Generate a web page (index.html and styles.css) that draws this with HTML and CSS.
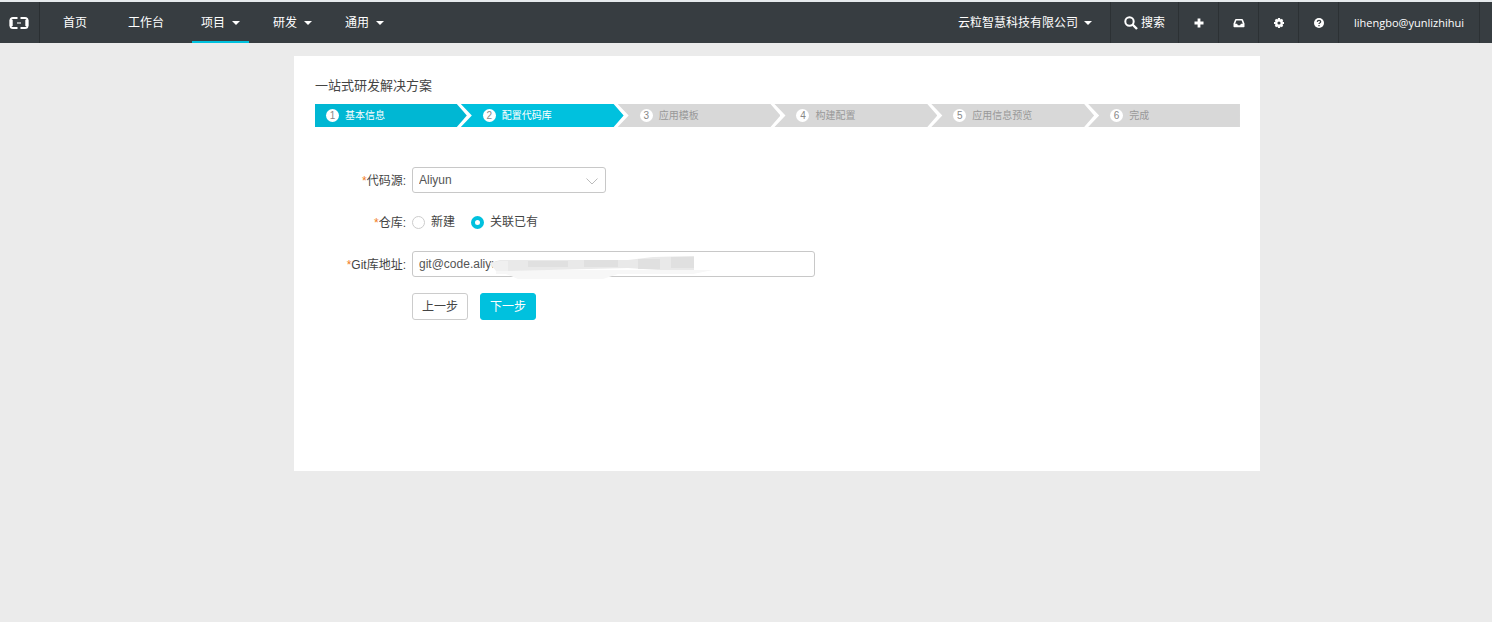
FILE: index.html
```
<!DOCTYPE html>
<html lang="zh-CN">
<head>
<meta charset="utf-8">
<title>一站式研发解决方案</title>
<link rel="stylesheet" href="styles.css">
</head>
<body>
<header class="topbar">
  <a class="logo" href="#" aria-label="控制台">
    <svg width="20" height="14" viewBox="0 0 20 14" fill="none" stroke="#fff"><path stroke-width="2" d="M8.500 2H4Q1.500 2 1.500 4.500v5Q1.500 12 4 12H8.500M11.500 2H16Q18.500 2 18.500 4.500v5Q18.500 12 16 12H11.500"/><path stroke-width="3" d="M2.200 4v6M17.800 4v6"/><path d="M8 7h4" stroke-width="1.500" stroke="#c9cbcd"/></svg>
  </a>
  <nav class="nav">
    <a class="nav-item plain" href="#">首页</a>
    <a class="nav-item plain" href="#">工作台</a>
    <a class="nav-item active" href="#">项目<span class="caret"></span></a>
    <a class="nav-item" href="#">研发<span class="caret"></span></a>
    <a class="nav-item" href="#">通用<span class="caret"></span></a>
  </nav>
  <div class="tools">
    <a class="tool company" href="#">云粒智慧科技有限公司<span class="caret"></span></a>
    <a class="tool search" href="#"><svg width="14" height="14" viewBox="0 0 14 14" fill="none" stroke="#fff" stroke-width="2"><circle cx="5.500" cy="5.500" r="4.200"/><path d="M8.500 8.500l4.500 4.500" stroke-width="2.400"/></svg>搜索</a>
    <a class="tool icon" href="#" aria-label="新建"><svg width="10" height="10" viewBox="0 0 10 10"><path d="M3.600.5h2.800v3.100h3.100v2.800H6.400v3.100H3.600V6.400H.5V3.600h3.100z" fill="#fff"/></svg></a>
    <a class="tool icon" href="#" aria-label="消息"><svg width="12" height="10" viewBox="0 0 12 10"><path fill-rule="evenodd" d="M3 1h6q.7 0 1 .7l1.500 3.800v3q0 .7-.7.700H1.200q-.7 0-.7-.7v-3L2 1.700Q2.300 1 3 1zm.4 1.500L2.200 5.700h1.900l.8 1.500h2.200l.8-1.500h1.900L8.600 2.500z" fill="#fff"/></svg></a>
    <a class="tool icon" href="#" aria-label="设置"><svg width="10" height="10" viewBox="0 0 10 10"><circle cx="5" cy="5" r="2.800" fill="none" stroke="#fff" stroke-width="2.400"/><path d="M5 0v1.500M5 8.500V10M0 5h1.500M8.500 5H10M1.500 1.500l1 1M7.500 7.500l1 1M8.500 1.500l-1 1M2.500 7.500l-1 1" stroke="#fff" stroke-width="2.200"/></svg></a>
    <a class="tool icon" href="#" aria-label="帮助"><svg width="10" height="10" viewBox="0 0 10 10"><circle cx="5" cy="5" r="5" fill="#fff"/><path d="M3.300 3.900Q3.400 2.400 5 2.400t1.700 1.400Q6.700 4.600 5.700 5 5 5.300 5 6.100M5 6.900v1.300" fill="none" stroke="#373d41" stroke-width="1.300"/></svg></a>
    <a class="tool user" href="#">lihengbo@yunlizhihui</a>
  </div>
</header>
<main class="page">
  <section class="panel">
    <h1 class="title">一站式研发解决方案</h1>
    <ol class="steps">
      <li class="step done"><span class="num">1</span>基本信息</li>
      <li class="step current"><span class="num">2</span>配置代码库</li>
      <li class="step"><span class="num">3</span>应用模板</li>
      <li class="step"><span class="num">4</span>构建配置</li>
      <li class="step"><span class="num">5</span>应用信息预览</li>
      <li class="step"><span class="num">6</span>完成</li>
    </ol>
    <form class="form">
      <label class="label" for="source"><span class="req">*</span>代码源:</label>
      <div class="select-wrap">
        <select class="field" id="source"><option>Aliyun</option></select>
        <svg class="arrow" width="12" height="7" viewBox="0 0 12 7" fill="none" stroke="#bbb"><path d="M.5.5L6 6 11.500.5"/></svg>
      </div>
      <span class="label" id="repo"><span class="req">*</span>仓库:</span>
      <div class="radios" role="radiogroup" aria-labelledby="repo">
        <label class="radio"><input type="radio" name="repo">新建</label>
        <label class="radio"><input type="radio" name="repo" checked>关联已有</label>
      </div>
      <label class="label" for="git"><span class="req">*</span>Git库地址:</label>
      <div class="git-wrap">
        <input class="field" id="git" type="text" value="git@code.aliyu">
        <svg class="smudge" width="225" height="26" viewBox="0 0 225 26">
          <path d="M8 16H225L205 20H130L115 25H30L18 20H8z" fill="#f7f7f7"/>
          <path d="M2 9L12 6H140L165 3 206 2V16H170L140 14 20 17 5 14z" fill="#e9e9e9"/>
          <path d="M40 7h40v6H40zM96 6h34v7H96zM150 5h22v10h-22zM183 3h23v11h-23z" fill="#e0e0e0"/>
          <path d="M2 9L12 7H20V17H8z" fill="#f0f0f0"/>
        </svg>
      </div>
      <div class="actions">
        <button class="btn" type="button">上一步</button>
        <button class="btn primary" type="button">下一步</button>
      </div>
    </form>
  </section>
</main>
</body>
</html>
```
FILE: styles.css
```
* { box-sizing: border-box; }
body {
  margin: 0;
  min-height: 100vh;
  background: #ebebeb;
  color: #444;
  font: 12px/18px "Liberation Sans", "Noto Sans CJK SC", sans-serif;
}
a { color: inherit; text-decoration: none; }
.topbar {
  display: flex;
  height: 43px;
  border-top: 2px solid #e6eaed;
  background: #373d41;
  color: #fff;
  font-family: "Open Sans", "Noto Sans CJK SC", sans-serif;
}
.logo {
  display: flex;
  align-items: center;
  justify-content: center;
  width: 40px;
  padding-right: 2px;
  border-right: 1px solid #2a2f32;
}
.nav { display: flex; gap: 15px; margin-left: 10px; }
.nav-item {
  display: flex;
  align-items: center;
  gap: 7px;
  padding: 1px 9px 0;
}
.plain { padding: 1px 13px 0; }
.active { box-shadow: inset 0 -2px #00c1de; }
.caret {
  border: 4px solid transparent;
  border-top-color: #fff;
  border-bottom: 0;
}
.tools { display: flex; margin-left: auto; padding-right: 12px; }
.tool {
  display: flex;
  align-items: center;
  justify-content: center;
  border-right: 1px solid #2c3134;
}
.company { gap: 6px; padding: 1px 18px 0; }
.search { gap: 3px; padding: 1px 13px 0; }
.icon { width: 40px; }
.user { width: 141px; font-size: 11px; }
.page { padding: 13px 232px 151px 294px; }
.panel { min-height: 415px; padding: 20px; padding-left: 21px; background: #fff; }
.title { margin: 0; font-size: 13px; line-height: 20px; font-weight: 400; }
.steps {
  display: flex;
  margin: 8px 0 0;
  padding: 0;
  list-style: none;
  font-size: 10px;
}
.step {
  display: flex;
  flex: 1 1 33px;
  align-items: center;
  gap: 6px;
  height: 23px;
  margin-left: -6px;
  padding-left: 22px;
  background: #d8d8d8;
  color: #999;
  white-space: nowrap;
  clip-path: polygon(0 0, calc(100% - 10px) 0, 100% 50%, calc(100% - 10px) 100%, 0 100%, 11px 50%);
}
.step:first-child {
  flex-basis: 22px;
  margin-left: 0;
  padding-left: 11px;
  clip-path: polygon(0 0, calc(100% - 10px) 0, 100% 50%, calc(100% - 10px) 100%, 0 100%);
}
.step:last-child {
  flex-basis: 22px;
  clip-path: polygon(0 0, 100% 0, 100% 100%, 0 100%, 11px 50%);
}
.done { background: #00b7d3; color: #fff; }
.current { background: #00c1de; color: #fff; }
.num {
  width: 13px;
  height: 13px;
  border-radius: 50%;
  background: #fff;
  color: #888;
  line-height: 13px;
  text-align: center;
}
.form {
  display: grid;
  grid-template-columns: 91px 1fr;
  column-gap: 6px;
  row-gap: 16px;
  align-items: center;
  margin-top: 40px;
}
.label { padding-top: 1px; text-align: right; white-space: nowrap; }
.req { color: #f27c22; }
.field {
  display: block;
  width: 100%;
  height: 26px;
  padding: 0 6px;
  border: 1px solid #c8c8c8;
  border-radius: 3px;
  background: #fff;
  color: #555;
  font: inherit;
  appearance: none;
}
.select-wrap { position: relative; width: 194px; }
.arrow { position: absolute; right: 8px; top: 11px; pointer-events: none; }
.radios { display: flex; gap: 16px; height: 26px; }
.radio { display: flex; align-items: center; gap: 6px; }
.radio input {
  width: 13px;
  height: 13px;
  margin: 0;
  border: 1px solid #ccc;
  border-radius: 50%;
  background: #fff;
  appearance: none;
}
.radio input:checked { border: 4px solid #00c1de; }
.git-wrap { position: relative; max-width: 403px; }
.smudge { position: absolute; left: 76px; top: 3px; pointer-events: none; }
.actions { grid-column: 2; display: flex; gap: 12px; }
.btn {
  height: 27px;
  padding: 1px 9px 0;
  border: 1px solid #ccc;
  border-radius: 3px;
  background: #fff;
  color: #444;
  font: inherit;
}
.primary { border-color: #00c1de; background: #00c1de; color: #fff; }
```
